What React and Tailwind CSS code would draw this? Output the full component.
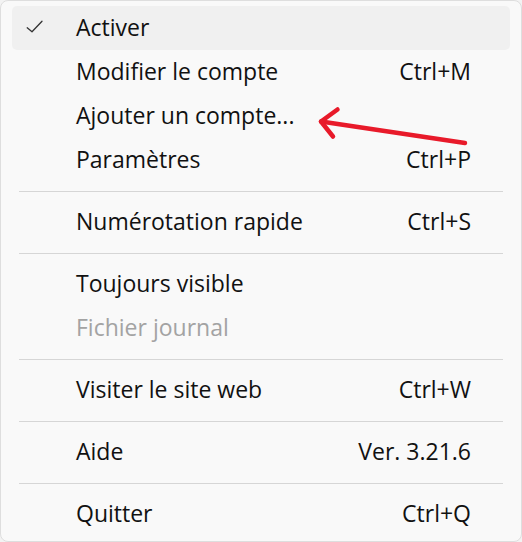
import React from "react";

const Row = ({ label, shortcut, checked, highlighted, disabled }) => (
  <div
    className={`flex h-[44px] items-center rounded-[5px] mx-[11px] ${highlighted ? "bg-[#f0f0f0]" : ""}`}
  >
    <div className="w-[64px] flex items-center pl-[13px]">
      {checked && (
        <svg width="20" height="16" viewBox="0 0 20 16">
          <path d="M2.2 7.8 L7 11.8 L17 1.2" fill="none" stroke="#333" strokeWidth="1.3" strokeLinecap="round" strokeLinejoin="round" />
        </svg>
      )}
    </div>
    <div className={`flex-1 pb-[2px] ${disabled ? "text-[#a3a3a3]" : "text-[#111]"}`}>{label}</div>
    {shortcut && <div className="pr-[39px] pb-[2px] text-[#111]">{shortcut}</div>}
  </div>
);

const Sep = () => (
  <div className="h-[18px] flex items-center px-[18px]">
    <div className="h-px w-full bg-[#d6d6d6]" />
  </div>
);

export default function App() {
  return (
    <div className="w-[522px] h-[542px] bg-[#f3f3f3]">
      <div
        className="relative w-full h-full bg-[#f9f9f9] border border-[#dedede] rounded-[8px] pt-[5px] text-[23px] leading-none"
        style={{ fontFamily: '"Segoe UI", "Open Sans", "Noto Sans", sans-serif' }}
      >
        <Row label="Activer" checked highlighted />
        <Row label="Modifier le compte" shortcut="Ctrl+M" />
        <Row label="Ajouter un compte..." />
        <Row label="Paramètres" shortcut="Ctrl+P" />
        <Sep />
        <Row label="Numérotation rapide" shortcut="Ctrl+S" />
        <Sep />
        <Row label="Toujours visible" />
        <Row label="Fichier journal" disabled />
        <Sep />
        <Row label="Visiter le site web" shortcut="Ctrl+W" />
        <Sep />
        <Row label="Aide" shortcut="Ver. 3.21.6" />
        <Sep />
        <Row label="Quitter" shortcut="Ctrl+Q" />
        <svg className="absolute left-0 top-0 pointer-events-none" width="522" height="542" viewBox="0 0 522 542">
          <g fill="none" stroke="#e81a2a" strokeWidth="4.5" strokeLinecap="round" strokeLinejoin="round">
            <path d="M464 142 L320 120.5" />
            <path d="M336.5 108.5 L320 120.5 L332 135.5" />
          </g>
        </svg>
      </div>
    </div>
  );
}
